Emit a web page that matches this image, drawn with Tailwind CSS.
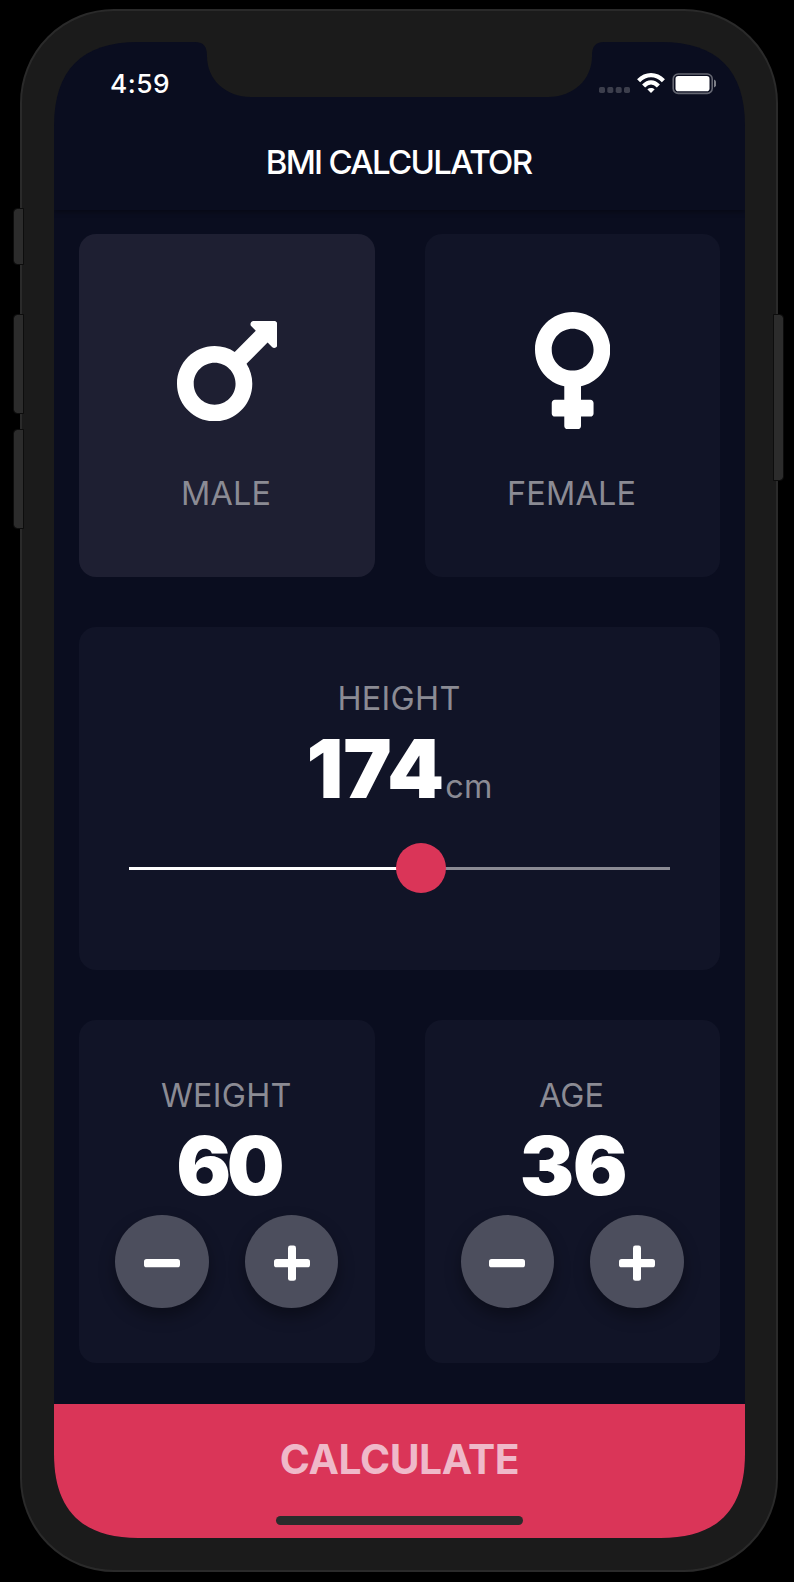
<!DOCTYPE html>
<html lang="en">
<head>
<meta charset="utf-8">
<title>BMI Calculator</title>
<script src="https://cdn.jsdelivr.net/npm/@tailwindcss/browser@4"></script>
</head>
<body class="bg-black font-['Inter',sans-serif]">
<div class="relative h-[1582px] w-[794px] overflow-hidden bg-black">

  <!-- Hardware shell -->
  <div class="absolute top-[9px] left-[20px] h-[1562.5px] w-[757.5px] rounded-[94px] border-2 border-[#2a2a2a] bg-[#1b1b1b]"></div>
  <div class="absolute top-[208.5px] left-[14px] h-[55.5px] w-[9px] rounded-l-[3px] bg-[#2c2c2c] outline-1 outline-[#0d0d0d]"></div>
  <div class="absolute top-[314.5px] left-[14px] h-[98px] w-[9px] rounded-l-[3px] bg-[#2c2c2c] outline-1 outline-[#0d0d0d]"></div>
  <div class="absolute top-[430px] left-[14px] h-[98px] w-[9px] rounded-l-[3px] bg-[#2c2c2c] outline-1 outline-[#0d0d0d]"></div>
  <div class="absolute top-[314.5px] left-[773.5px] h-[165px] w-[9px] rounded-r-[3px] bg-[#2c2c2c] outline-1 outline-[#0d0d0d]"></div>

  <!-- Screen -->
  <main class="absolute top-[42px] left-[54px] flex h-[1496px] w-[691px] flex-col bg-[#0a0d1f] [clip-path:path('M0_84C0_28_28_0_84_0H607C663_0_691_28_691_84V1412C691_1468_663_1496_607_1496H84C28_1496_0_1468_0_1412Z')]">

    <!-- Notch -->
    <svg class="absolute top-0 left-[141px]" width="410" height="55" viewBox="195 42 410 55" fill="#1b1b1b"><path d="M195 42C204 42 207 47 207 56C207 80 226 97 251 97H548C573 97 592 80 592 56C592 47 595 42 604 42Z"/></svg>

    <!-- Status bar -->
    <header class="h-[168px] shrink-0 shadow-[0_2px_5px_rgba(0,0,0,0.35)]">
      <div class="flex h-[84px] items-start justify-between pt-[31px] pr-[29.5px] pl-[56px]">
        <span class="text-[26.3px] leading-[22px] font-[550] tracking-[0.5px] text-white">4:59</span>
        <svg width="118" height="22" viewBox="598 73 118 22">
          <g fill="#3c3e4c"><rect x="599" y="87" width="6" height="6" rx="1.7"/><rect x="607.3" y="87" width="6" height="6" rx="1.7"/><rect x="615.7" y="87" width="6" height="6" rx="1.7"/><rect x="624" y="87" width="6" height="6" rx="1.7"/></g>
          <g fill="none" stroke="#fff" stroke-width="4.3">
            <path d="M638.6 80.8C646 73.3 656 73.3 663.4 80.8"/>
            <path d="M643.6 86C648.3 81.2 653.7 81.2 658.4 86"/>
          </g>
          <path d="M647.3 89.3C649.5 87.4 652.5 87.4 654.7 89.3L651 93Z" fill="#fff"/>
          <rect x="673.2" y="74" width="39" height="19.4" rx="5" fill="none" stroke="#656772" stroke-width="1.6"/>
          <rect x="675.5" y="76" width="34" height="15.2" rx="2.8" fill="#fff"/>
          <path d="M714 79.5C717.6 81 717.6 86 714 87.5Z" fill="#7d7f88"/>
        </svg>
      </div>
      <h1 class="pr-[2px] text-center text-[33px] leading-[72px] font-[550] tracking-[-1.68px] text-white">BMI CALCULATOR</h1>
    </header>

    <!-- Cards -->
    <section class="flex flex-col gap-[50px] px-[25px] pt-[24px]">
      <div class="flex gap-[50px]">
        <div class="flex h-[343px] flex-1 flex-col items-center rounded-[17px] bg-[#1e1f32] pt-[70px]">
          <div class="flex h-[134px] items-center justify-center">
            <svg width="100.4" height="100.4" viewBox="0 64 384 384" fill="#fff"><path d="M372 64h-79c-10.7 0-16 12.9-8.5 20.5l16.9 16.9-80.7 80.7c-22.2-14-48.5-22.1-76.7-22.1C64.5 160 0 224.5 0 304s64.5 144 144 144 144-64.5 144-144c0-28.2-8.1-54.5-22.1-76.7l80.7-80.7 16.9 16.9c7.6 7.6 20.5 2.2 20.5-8.5V76c0-6.6-5.4-12-12-12zM144 384c-44.1 0-80-35.9-80-80s35.9-80 80-80 80 35.9 80 80-35.9 80-80 80z"/></svg>
          </div>
          <span class="mt-[36px] pr-[1.4px] text-[32.4px] leading-[40px] tracking-[0.2px] text-[#8b8b94]">MALE</span>
        </div>
        <div class="flex h-[343px] flex-1 flex-col items-center rounded-[17px] bg-[#111427] pt-[70px]">
          <div class="flex h-[134px] items-center justify-center">
            <svg width="75.3" height="117.1" viewBox="0 32 288 448" fill="#fff"><path d="M288 176c0-79.5-64.5-144-144-144S0 96.5 0 176c0 68.5 47.9 125.9 112 140.4V368H76c-6.6 0-12 5.4-12 12v40c0 6.6 5.4 12 12 12h36v36c0 6.6 5.4 12 12 12h40c6.6 0 12-5.4 12-12v-36h36c6.6 0 12-5.4 12-12v-40c0-6.6-5.4-12-12-12h-36v-51.6c64.1-14.6 112-71.9 112-140.4zm-224 0c0-44.1 35.9-80 80-80s80 35.9 80 80-35.9 80-80 80-80-35.9-80-80z"/></svg>
          </div>
          <span class="mt-[36px] pr-[1.4px] text-[32.4px] leading-[40px] tracking-[0.2px] text-[#8b8b94]">FEMALE</span>
        </div>
      </div>

      <div class="flex h-[343px] flex-col items-center rounded-[17px] bg-[#111427] pt-[52px]">
        <span class="pr-[1px] text-[32.4px] leading-[40px] tracking-[0.3px] text-[#8b8b94]">HEIGHT</span>
        <div class="mt-[10px] flex h-[80px] items-baseline">
          <span class="pr-[1px] text-[81.4px] leading-[80px] font-black text-white">174</span>
          <span class="text-[32.4px] leading-[40px] tracking-[0.2px] text-[#8b8b94]">cm</span>
        </div>
        <div class="relative mt-[34.3px] flex h-[50px] w-[541px] items-center">
          <div class="h-[3.4px] w-[292px] bg-white"></div>
          <div class="h-[3.4px] flex-1 bg-[#8b8b94]"></div>
          <div class="absolute top-0 left-[267px] size-[50px] rounded-full bg-[#da3558]"></div>
        </div>
      </div>

      <div class="flex gap-[50px]">
        <div class="flex h-[343px] flex-1 flex-col items-center rounded-[17px] bg-[#111427] pt-[55.5px]">
          <span class="pr-[1px] text-[32.4px] leading-[40px] tracking-[0.25px] text-[#8b8b94]">WEIGHT</span>
          <span class="mt-[10px] mr-[-3px] text-[81.4px] leading-[80px] font-black tracking-[-4.5px] text-white">60</span>
          <div class="mt-[9px] flex gap-[36.3px]">
            <button class="flex size-[93.5px] items-center justify-center rounded-full bg-[#4c4e5d] pt-[3.5px] shadow-[0_8px_16px_rgba(0,0,0,0.35)]"><svg width="36" height="36" fill="#fff"><rect y="14" width="36" height="8.3" rx="2.6"/></svg></button>
            <button class="flex size-[93.5px] items-center justify-center rounded-full bg-[#4c4e5d] pt-[3.5px] shadow-[0_8px_16px_rgba(0,0,0,0.35)]"><svg width="36" height="36" fill="#fff"><rect y="14" width="36" height="8.3" rx="2.6"/><rect x="14" y="0.5" width="8" height="35.3" rx="2.4"/></svg></button>
          </div>
        </div>
        <div class="flex h-[343px] flex-1 flex-col items-center rounded-[17px] bg-[#111427] pt-[55.5px]">
          <span class="pr-[1.5px] text-[32.4px] leading-[40px] text-[#8b8b94]">AGE</span>
          <span class="mt-[10px] pl-[1.5px] text-[81.4px] leading-[80px] font-black tracking-[-1.5px] text-white">36</span>
          <div class="mt-[9px] flex gap-[36.3px]">
            <button class="flex size-[93.5px] items-center justify-center rounded-full bg-[#4c4e5d] pt-[3.5px] shadow-[0_8px_16px_rgba(0,0,0,0.35)]"><svg width="36" height="36" fill="#fff"><rect y="14" width="36" height="8.3" rx="2.6"/></svg></button>
            <button class="flex size-[93.5px] items-center justify-center rounded-full bg-[#4c4e5d] pt-[3.5px] shadow-[0_8px_16px_rgba(0,0,0,0.35)]"><svg width="36" height="36" fill="#fff"><rect y="14" width="36" height="8.3" rx="2.6"/><rect x="14" y="0.5" width="8" height="35.3" rx="2.4"/></svg></button>
          </div>
        </div>
      </div>
    </section>

    <!-- Calculate -->
    <footer class="mt-auto flex h-[133.7px] shrink-0 flex-col items-center bg-[#da3558] pt-[30px]">
      <span class="text-[40.8px] leading-[50px] font-bold tracking-[-0.45px] text-[#efb9c9]">CALCULATE</span>
      <div class="mt-[31.7px] h-[9px] w-[247px] rounded-full bg-[#2b2b2b]"></div>
    </footer>
  </main>
</div>
</body>
</html>
